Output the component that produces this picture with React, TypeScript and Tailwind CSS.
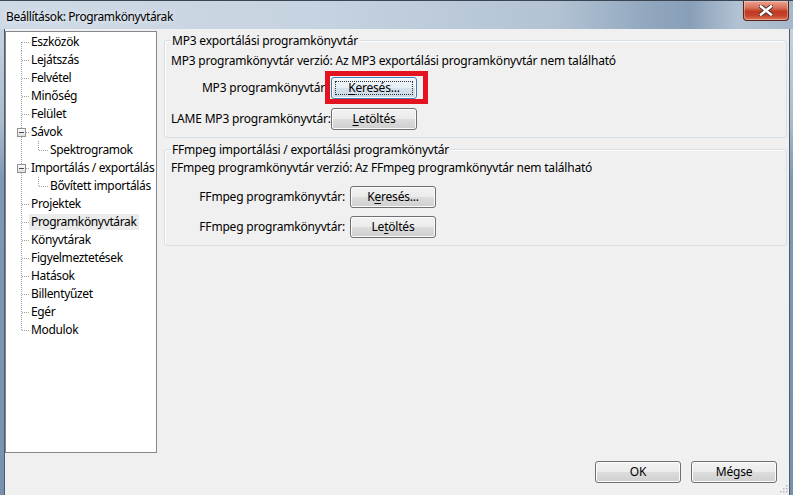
import React from "react"

type TreeItem = {
  label: string
  child?: boolean
  expander?: boolean
  first?: boolean
  last?: boolean
  selected?: boolean
}

const items: TreeItem[] = [
  { label: "Eszközök", first: true },
  { label: "Lejátszás" },
  { label: "Felvétel" },
  { label: "Minőség" },
  { label: "Felület" },
  { label: "Sávok", expander: true },
  { label: "Spektrogramok", child: true },
  { label: "Importálás / exportálás", expander: true },
  { label: "Bővített importálás", child: true },
  { label: "Projektek" },
  { label: "Programkönyvtárak", selected: true },
  { label: "Könyvtárak" },
  { label: "Figyelmeztetések" },
  { label: "Hatások" },
  { label: "Billentyűzet" },
  { label: "Egér" },
  { label: "Modulok", last: true },
]

const dot = { stroke: "#a0a0a0", strokeWidth: 1, strokeDasharray: "1 1", shapeRendering: "crispEdges" as const }

function Connector({ item }: { item: TreeItem }) {
  const w = item.child ? 42 : 23
  const y1 = item.first ? 9 : 0
  const y2 = item.last ? 9.5 : 18
  return (
    <svg width={w} height={18} className="shrink-0">
      <line x1={15.5} y1={y1} x2={15.5} y2={y2} {...dot} />
      {item.child ? (
        <>
          <line x1={32.5} y1={0} x2={32.5} y2={9.5} {...dot} />
          <line x1={33} y1={9.5} x2={42} y2={9.5} {...dot} />
        </>
      ) : (
        <line x1={16} y1={9.5} x2={23} y2={9.5} {...dot} />
      )}
      {item.expander && (
        <>
          <defs>
            <linearGradient id="exp" x1="0" y1="0" x2="0" y2="1">
              <stop offset="0" stopColor="#ffffff" />
              <stop offset="1" stopColor="#dcdcdc" />
            </linearGradient>
          </defs>
          <rect x={11.5} y={5.5} width={8} height={8} fill="url(#exp)" stroke="#919191" shapeRendering="crispEdges" />
          <line x1={13} y1={9.5} x2={18} y2={9.5} stroke="#4b4b4b" shapeRendering="crispEdges" />
        </>
      )}
    </svg>
  )
}

function Btn({ children, focused }: { children: React.ReactNode; focused?: boolean }) {
  return (
    <button
      className={
        "relative w-[86px] h-[22px] rounded-[3px] border text-[12px] leading-[20px] text-black shadow-[inset_0_0_0_1px_#fbfbfb] " +
        (focused
          ? "border-[#3c7fb1] bg-[linear-gradient(to_bottom,#f1f6fa_0%,#e6eff6_50%,#d6e3ee_50%,#c9d9e6_100%)]"
          : "border-[#707070] bg-[linear-gradient(to_bottom,#f2f2f2_0%,#ebebeb_50%,#dddddd_50%,#cfcfcf_100%)]")
      }
    >
      {focused && <span className="absolute inset-[3px] border border-dotted border-[#333]" />}
      <span className="relative">{children}</span>
    </button>
  )
}

export default function App() {
  return (
    <div className="w-[793px] h-[495px] flex flex-col overflow-hidden relative font-['Noto_Sans',sans-serif] text-[12px] tracking-[-0.2px] text-black bg-[#7f98b3]">
      {/* title bar */}
      <div className="relative h-[29px] shrink-0 flex items-center border-t border-[#3a4654] bg-[linear-gradient(to_right,#cfdae6_0%,#c6d3e0_40%,#b3c3d4_70%,#91a7be_82%,#889fb8_87%,#b2c2d3_93%,#a5b7ca_100%)]">
        <span className="pl-[6px] pt-[3px] text-[12px] tracking-[-0.4px] [text-shadow:0_0_6px_#ffffff]">Beállítások: Programkönyvtárak</span>
        <div className="absolute right-[4px] top-0 w-[46px] h-[20px] rounded-b-[4px] border border-t-0 border-[#5b2118] bg-[linear-gradient(to_bottom,#eba391_0%,#d9735c_35%,#c23a22_55%,#c5402a_75%,#de7652_100%)] shadow-[inset_0_0_0_1px_rgba(255,255,255,0.35)] flex items-center justify-center">
          <svg width="14" height="11" viewBox="0 0 14 11">
            <path d="M2 1.5 L12 9.5 M12 1.5 L2 9.5" stroke="#4a2a24" strokeWidth="4.4" strokeLinecap="square" />
            <path d="M2 1.5 L12 9.5 M12 1.5 L2 9.5" stroke="#ffffff" strokeWidth="2.6" strokeLinecap="square" />
          </svg>
        </div>
      </div>

      <div className="flex-1 flex">
        <div className="w-[5px] border-r border-[#4a5b6c] bg-[linear-gradient(to_bottom,#c6d2de_0%,#aabbcc_20%,#7f98b3_32%,#7891ad_100%)]" />

        {/* client */}
        <div className="relative w-[784px] bg-[#f0f0f0] flex flex-col">
          <div className="flex mt-[2px]">
            {/* tree */}
            <div className="w-[152px] h-[422px] border border-[#828790] bg-white pt-[1px] tracking-[-0.35px] overflow-hidden">
              {items.map((it) => (
                <div key={it.label} className="h-[18px] flex items-center">
                  <Connector item={it} />
                  <span className={"px-[2px] h-[16px] leading-[16px] whitespace-nowrap " + (it.selected ? "bg-[#ebebeb]" : "")}>
                    {it.label}
                  </span>
                </div>
              ))}
            </div>

            {/* right panel */}
            <div className="ml-[7px] w-[623px] flex flex-col">
              <div className="relative mt-[9px] h-[98px] border border-[#d5dfe5] rounded-[3px] shadow-[inset_1px_1px_0_#ffffff] pl-[6px] pt-[12px]">
                <span className="absolute left-[6px] top-[-9px] px-[1px] leading-[18px] bg-[#f0f0f0]">MP3 exportálási programkönyvtár</span>
                <div className="h-[16px] leading-[16px] whitespace-nowrap">
                  MP3 programkönyvtár verzió: Az MP3 exportálási programkönyvtár nem található
                </div>
                <div className="mt-[8px] flex items-center">
                  <span className="w-[160px] pr-[3px] text-right whitespace-nowrap">MP3 programkönyvtár:</span>
                  <Btn focused>
                    <span className="underline underline-offset-2">K</span>eresés...
                  </Btn>
                </div>
                <div className="mt-[9px] flex items-center">
                  <span className="w-[160px] pr-[3px] text-right whitespace-nowrap">LAME MP3 programkönyvtár:</span>
                  <Btn>
                    <span className="underline underline-offset-2">L</span>etöltés
                  </Btn>
                </div>
              </div>

              <div className="relative mt-[11px] h-[97px] border border-[#d5dfe5] rounded-[3px] shadow-[inset_1px_1px_0_#ffffff] pl-[6px] pt-[10px]">
                <span className="absolute left-[6px] top-[-9px] px-[1px] leading-[18px] bg-[#f0f0f0]">FFmpeg importálási / exportálási programkönyvtár</span>
                <div className="h-[16px] leading-[16px] whitespace-nowrap">
                  FFmpeg programkönyvtár verzió: Az FFmpeg programkönyvtár nem található
                </div>
                <div className="mt-[10px] flex items-center">
                  <span className="w-[179px] pr-[5px] text-right whitespace-nowrap">FFmpeg programkönyvtár:</span>
                  <Btn>
                    K<span className="underline underline-offset-2">e</span>resés...
                  </Btn>
                </div>
                <div className="mt-[8px] flex items-center">
                  <span className="w-[179px] pr-[5px] text-right whitespace-nowrap">FFmpeg programkönyvtár:</span>
                  <Btn>
                    Le<span className="underline underline-offset-2">t</span>öltés
                  </Btn>
                </div>
              </div>
            </div>
          </div>

          {/* bottom buttons */}
          <div className="mt-[8px] flex justify-end gap-[10px] pr-[12px]">
            <Btn>OK</Btn>
            <Btn>Mégse</Btn>
          </div>

          {/* resize grip */}
          <svg width="8" height="8" className="absolute right-[1px] bottom-[2px]">
            {[[6, 0], [6, 3], [3, 3], [6, 6], [3, 6], [0, 6]].map(([x, y]) => (
              <rect key={`${x}-${y}`} x={x} y={y} width="1.5" height="1.5" fill="#b8b8b8" />
            ))}
          </svg>

          {/* highlight marker */}
          <div className="absolute left-[320px] top-[42px] w-[103px] h-[33px] border-[5px] border-[#e3141f]" />
        </div>

        <div className="w-[4px] border-l border-[#4a5b6c] bg-[linear-gradient(to_bottom,#c6d2de_0%,#aabbcc_20%,#7f98b3_32%,#7891ad_100%)]" />
      </div>
    </div>
  )
}
